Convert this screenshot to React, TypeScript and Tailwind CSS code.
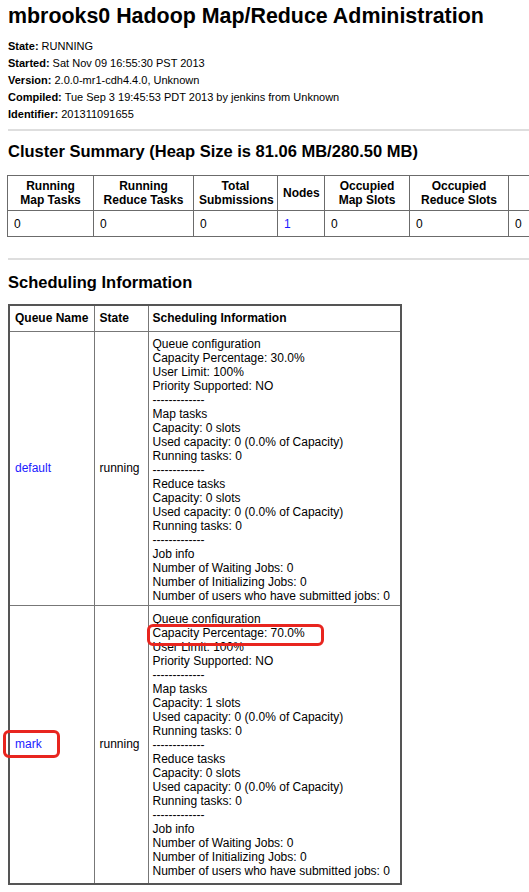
import React from "react";

const ff = "font-['Liberation_Sans',Arial,Helvetica,sans-serif]";

const schedLines = (cap: string, mapSlots: string) => [
  "Queue configuration",
  `Capacity Percentage: ${cap}`,
  "User Limit: 100%",
  "Priority Supported: NO",
  "-------------",
  "Map tasks",
  `Capacity: ${mapSlots} slots`,
  "Used capacity: 0 (0.0% of Capacity)",
  "Running tasks: 0",
  "-------------",
  "Reduce tasks",
  "Capacity: 0 slots",
  "Used capacity: 0 (0.0% of Capacity)",
  "Running tasks: 0",
  "-------------",
  "Job info",
  "Number of Waiting Jobs: 0",
  "Number of Initializing Jobs: 0",
  "Number of users who have submitted jobs: 0",
];

export default function App() {
  const clusterHeaders: [string, number][] = [
    ["Running Map Tasks", 86],
    ["Running Reduce Tasks", 100],
    ["Total Submissions", 84],
    ["Nodes", 47],
    ["Occupied Map Slots", 85],
    ["Occupied Reduce Slots", 99],
  ];
  const clusterValues = ["0", "0", "0", "1", "0", "0"];

  return (
    <div className={`relative w-full h-[892px] overflow-hidden bg-white text-black ${ff}`}>
      <div className="px-2 pt-1">
        <h1 className="text-[21.4px] leading-[25px] font-bold whitespace-nowrap">
          mbrooks0 Hadoop Map/Reduce Administration
        </h1>
        <div className="mt-[9px] text-[11px] leading-[17px]">
          <div>
            <b>State:</b> RUNNING
          </div>
          <div>
            <b>Started:</b> Sat Nov 09 16:55:30 PST 2013
          </div>
          <div>
            <b>Version:</b> 2.0.0-mr1-cdh4.4.0, Unknown
          </div>
          <div>
            <b>Compiled:</b> Tue Sep 3 19:45:53 PDT 2013 by jenkins from Unknown
          </div>
          <div>
            <b>Identifier:</b> 201311091655
          </div>
        </div>
        <div className="mt-[6px] h-[2px] w-[700px] bg-[#dedede]" />

        <h2 className="mt-[10px] text-[16.5px] leading-[21px] font-bold whitespace-nowrap">
          Cluster Summary (Heap Size is 81.06 MB/280.50 MB)
        </h2>
        <table className="mt-[13px] -ml-px border-collapse text-[12px] leading-[14px] table-fixed w-[700px]">
          <colgroup>
            {clusterHeaders.map(([, w], i) => (
              <col key={i} style={{ width: w }} />
            ))}
            <col style={{ width: 200 }} />
          </colgroup>
          <tbody>
            <tr className="h-[35px]">
              {clusterHeaders.map(([h], i) => (
                <th
                  key={i}
                  className="border border-[#6b6b6b] px-[5px] py-[2px] font-bold text-center align-middle"
                >
                  {h}
                </th>
              ))}
              <th className="border border-[#6b6b6b] px-[5px]" />
            </tr>
            <tr className="h-[26px]">
              {clusterValues.map((v, i) => (
                <td key={i} className="border border-[#6b6b6b] px-[6px] align-middle">
                  {i === 3 ? <a className="text-[#1a1aff]">{v}</a> : v}
                </td>
              ))}
              <td className="border border-[#6b6b6b] px-[6px] align-middle">0</td>
            </tr>
          </tbody>
        </table>
        <div className="mt-[21px] h-[2px] w-[700px] bg-[#dedede]" />

        <h2 className="mt-[12px] text-[16.5px] leading-[21px] font-bold whitespace-nowrap">
          Scheduling Information
        </h2>
        <table className="mt-[11px] border-collapse border-2 border-[#555] text-[12px] leading-[14px] table-fixed w-[392px]">
          <colgroup>
            <col style={{ width: 85 }} />
            <col style={{ width: 54 }} />
            <col style={{ width: 253 }} />
          </colgroup>
          <tbody>
            <tr className="h-[26px]">
              <th className="border border-[#777] px-[5px] text-left font-bold">Queue Name</th>
              <th className="border border-[#777] px-[5px] text-left font-bold">State</th>
              <th className="border border-[#777] px-[4px] text-left font-bold">Scheduling Information</th>
            </tr>
            <tr>
              <td className="border border-[#777] px-[5px] align-middle">
                <a className="text-[#1a1aff]">default</a>
              </td>
              <td className="border border-[#777] px-[5px] align-middle">running</td>
              <td className="border border-[#777] px-[4px] pt-[5px] pb-[2px] whitespace-nowrap">
                {schedLines("30.0%", "0").map((l, i) => (
                  <div key={i}>{l}</div>
                ))}
              </td>
            </tr>
            <tr>
              <td className="border border-[#777] px-[5px] align-middle">
                <a className="text-[#1a1aff]">mark</a>
              </td>
              <td className="border border-[#777] px-[5px] align-middle">running</td>
              <td className="border border-[#777] px-[4px] pt-[6px] pb-[5px] whitespace-nowrap">
                {schedLines("70.0%", "1").map((l, i) => (
                  <div key={i}>{l}</div>
                ))}
              </td>
            </tr>
          </tbody>
        </table>
      </div>

      <div className="absolute left-[147px] top-[624px] w-[177px] h-[22px] border-[3px] border-[#e8251f] rounded-[6px]" />
      <div className="absolute left-[3px] top-[730px] w-[57px] h-[28px] border-[3px] border-[#e8251f] rounded-[6px]" />
    </div>
  );
}
